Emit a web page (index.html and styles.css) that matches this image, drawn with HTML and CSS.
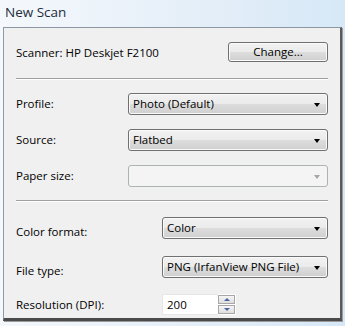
FILE: index.html
```html
<!DOCTYPE html>
<html>
<head>
<meta charset="utf-8">
<link rel="stylesheet" href="styles.css">
</head>
<body>
<div class="window">
  <div class="titlebar">New Scan</div>
  <div class="panel">
    <div class="scanner-row">
      <span class="scanner-label">Scanner: HP Deskjet F2100</span>
      <div class="btn">Change...</div>
    </div>
    <div class="sep"></div>
    <div class="form form-a">
      <div class="label">Profile:</div>
      <div class="combo"><span>Photo (Default)</span><span class="arrow"></span></div>
      <div class="label">Source:</div>
      <div class="combo"><span>Flatbed</span><span class="arrow"></span></div>
      <div class="label">Paper size:</div>
      <div class="combo disabled"><span></span><span class="arrow"></span></div>
    </div>
    <div class="sep sep-b"></div>
    <div class="form form-b">
      <div class="label low">Color format:</div>
      <div class="combo"><span>Color</span><span class="arrow"></span></div>
      <div class="label low">File type:</div>
      <div class="combo"><span>PNG (IrfanView PNG File)</span><span class="arrow"></span></div>
      <div class="label low2">Resolution (DPI):</div>
      <div class="spin">
        <div class="spin-input">200</div>
        <div class="spin-btns">
          <div class="spin-btn"><span class="up"></span></div>
          <div class="spin-btn"><span class="down"></span></div>
        </div>
      </div>
    </div>
  </div>
</div>
</body>
</html>
```

FILE: styles.css
```css
* { box-sizing: border-box; }
html, body {
  margin: 0;
  padding: 0;
  width: 345px;
  height: 326px;
  overflow: hidden;
}
body {
  font-family: "Open Sans", "Noto Sans", sans-serif;
  font-size: 11.5px;
  color: #000;
}
.window {
  width: 345px;
  height: 326px;
  background: linear-gradient(to right, #f4f8fc 0%, #e4eef8 60%, #d6e8f7 100%);
  display: flex;
  flex-direction: column;
}
.titlebar {
  height: 27px;
  padding: 3px 0 0 5px;
  font-size: 13.5px;
  color: #1e2d3d;
  line-height: 18px;
}
.panel {
  margin-left: 3px;
  width: 339px;
  height: 294px;
  background: #f0f0f0;
  border-top: 1px solid #8c97a2;
  border-left: 1px solid #8e9aa6;
  border-right: 2px solid #5a5a5a;
  border-bottom: 3px solid #4a4a4a;
  box-shadow: 1px 1px 0 #9a9a9a;
  padding: 0 12px 0 12px;
  display: flex;
  flex-direction: column;
}
.scanner-row {
  margin-top: 14px;
  height: 20px;
  display: flex;
  align-items: center;
  justify-content: space-between;
}
.btn {
  width: 100px;
  height: 20px;
  border: 1px solid #707070;
  border-radius: 3px;
  background: linear-gradient(to bottom, #f2f2f2 0%, #ebebeb 48%, #dddddd 52%, #cfcfcf 100%);
  box-shadow: inset 0 0 0 1px #fbfbfb;
  display: flex;
  align-items: center;
  justify-content: center;
  font-size: 11.5px;
  padding-bottom: 1px;
}
.sep {
  margin-top: 16px;
  background: #a0a0a0;
  border-bottom: 1px solid #fff;
  height: 2px;
}
.form {
  display: grid;
  align-items: center;
}
.form-a {
  margin-top: 13px;
  grid-template-columns: 112px 1fr;
  row-gap: 14px;
}
.sep-b {
  margin-top: 13px;
}
.form-b {
  margin-top: 14px;
  grid-template-columns: 146px 1fr;
  row-gap: 15px;
}
.label {
  line-height: 16px;
}
.label.low {
  align-self: start;
  padding-top: 8px;
}
.label.low2 {
  align-self: start;
  padding-top: 3px;
}
.combo {
  height: 22px;
  border: 1px solid #707070;
  border-radius: 3px;
  background: linear-gradient(to bottom, #f2f2f2 0%, #ebebeb 48%, #dddddd 52%, #cfcfcf 100%);
  box-shadow: inset 0 0 0 1px #fafafa;
  display: flex;
  align-items: center;
  justify-content: space-between;
  padding: 0 7px 1px 4px;
  font-size: 11.5px;
}
.combo.disabled {
  background: #f4f4f4;
  border-color: #adb2b5;
  box-shadow: none;
}
.arrow {
  width: 0;
  height: 0;
  border-left: 3.5px solid transparent;
  border-right: 3.5px solid transparent;
  border-top: 4px solid #000;
  margin-top: 2px;
}
.combo.disabled .arrow {
  border-top-color: #a6a6a6;
}
.spin {
  display: flex;
  height: 21px;
  width: 74px;
}
.spin-input {
  width: 56px;
  height: 21px;
  background: #fff;
  border: 1px solid #e6e6e6;
  border-right: none;
  padding: 1px 0 0 4px;
  line-height: 17px;
}
.spin-btns {
  width: 18px;
  display: flex;
  flex-direction: column;
  gap: 1px;
  background: #fff;
  padding: 1px 1px 1px 0;
}
.spin-btn {
  flex: 1;
  border: 1px solid #a7a7a7;
  background: linear-gradient(to bottom, #f6f6f6, #dedede);
  display: flex;
  align-items: center;
  justify-content: center;
}
.up {
  width: 0; height: 0;
  border-left: 3px solid transparent;
  border-right: 3px solid transparent;
  border-bottom: 3px solid #4b63a8;
}
.down {
  width: 0; height: 0;
  border-left: 3px solid transparent;
  border-right: 3px solid transparent;
  border-top: 3px solid #4b63a8;
}
```
